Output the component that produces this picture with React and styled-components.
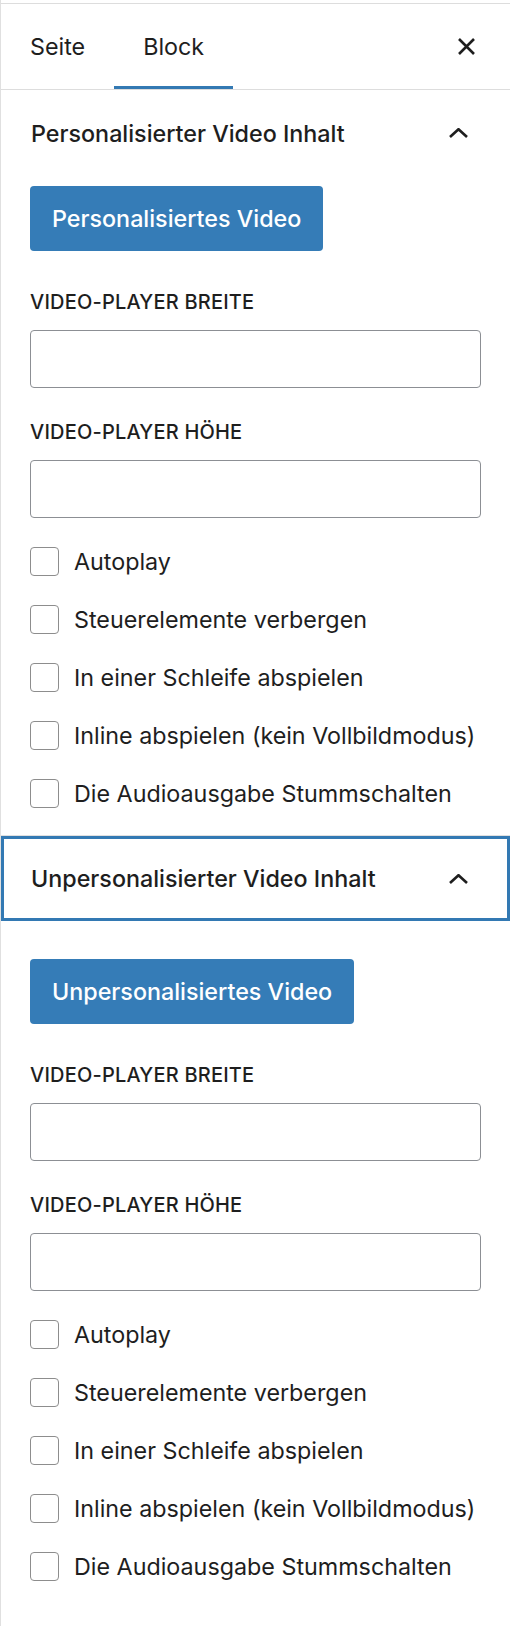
import React from 'react';
import styled, { createGlobalStyle } from 'styled-components';

const GlobalStyle = createGlobalStyle`
    body {
        margin: 0;
        background: #ffffff;
        font-family: Inter, 'Noto Sans', 'Liberation Sans', sans-serif;
        color: #1e1e1e;
    }
`;

const Sidebar = styled.div`
    width: 510px;
    min-height: 1626px;
    box-sizing: border-box;
    padding-top: 3px;
    border-left: 1px solid #e0e0e0;
    background: #ffffff;
`;

const Header = styled.div`
    display: flex;
    align-items: stretch;
    height: 85px;
    padding-right: 22px;
    border-top: 1px solid #dddddd;
    border-bottom: 1px solid #dddddd;
`;

const Tab = styled.div`
    display: flex;
    align-items: center;
    padding: 0 29px;
    font-size: 23.3px;
    color: #1e1e1e;
    box-shadow: ${(p) => (p.$active ? 'inset 0 -3px 0 #3379b3' : 'none')};
`;

const CloseButton = styled.div`
    margin-left: auto;
    width: 43px;
    display: flex;
    align-items: center;
    justify-content: center;
`;

const Panel = styled.section`
    border-top: ${(p) => (p.$divided ? '1px solid #e0e0e0' : 'none')};
`;

const PanelTitle = styled.div`
    display: flex;
    align-items: center;
    justify-content: space-between;
    height: ${(p) => (p.$focused ? '85px' : '86px')};
    padding: 0 42px 0 30px;
    font-size: 23.3px;
    font-weight: 500;
    box-shadow: ${(p) => (p.$focused ? 'inset 0 0 0 3px #3379b3' : 'none')};
`;

const PanelBody = styled.div`
    padding: ${(p) => p.$top}px 29px 27px 29px;
`;

const PrimaryButton = styled.div`
    display: inline-flex;
    align-items: center;
    height: 65px;
    padding: 0 22px;
    box-sizing: border-box;
    border-radius: 4px;
    background: #357cb7;
    color: #ffffff;
    font-size: 23.3px;
    font-weight: 500;
`;

const Field = styled.div`
    margin-top: ${(p) => p.$gap}px;
`;

const Label = styled.div`
    font-size: 20px;
    font-weight: 500;
    line-height: 28px;
    letter-spacing: 0.2px;
    text-transform: uppercase;
    margin-bottom: 14px;
`;

const TextInput = styled.div`
    height: 58px;
    box-sizing: border-box;
    border: 1px solid #8c8f94;
    border-radius: 4px;
    background: #ffffff;
`;

const CheckList = styled.div`
    display: flex;
    flex-direction: column;
    gap: 29px;
    margin-top: 29px;
`;

const CheckRow = styled.div`
    display: flex;
    align-items: center;
    gap: 15px;
    font-size: 23.3px;
    line-height: 29px;
`;

const Box = styled.span`
    width: 29px;
    height: 29px;
    box-sizing: border-box;
    border: 1px solid #8d8d8d;
    border-radius: 4px;
    flex-shrink: 0;
`;

const options = [
    'Autoplay',
    'Steuerelemente verbergen',
    'In einer Schleife abspielen',
    'Inline abspielen (kein Vollbildmodus)',
    'Die Audioausgabe Stummschalten',
];

const panels = [
    { title: 'Personalisierter Video Inhalt', button: 'Personalisiertes Video', top: 10 },
    { title: 'Unpersonalisierter Video Inhalt', button: 'Unpersonalisiertes Video', top: 38, focused: true },
];

const Chevron = () => (
    <svg width="19" height="10" viewBox="0 0 19 10">
        <path d="M1 9 L9.5 1.2 L18 9" fill="none" stroke="#1e1e1e" strokeWidth="2.6" />
    </svg>
);

const CloseIcon = () => (
    <svg width="17" height="17" viewBox="0 0 17 17">
        <path d="M1 1 L16 16 M16 1 L1 16" fill="none" stroke="#1e1e1e" strokeWidth="2.6" />
    </svg>
);

const App = () => (
    <>
        <GlobalStyle />
        <Sidebar>
            <Header>
                <Tab>Seite</Tab>
                <Tab $active>Block</Tab>
                <CloseButton>
                    <CloseIcon />
                </CloseButton>
            </Header>
            {panels.map((panel, i) => (
                <Panel key={panel.title} $divided={i > 0}>
                    <PanelTitle $focused={panel.focused}>
                        {panel.title}
                        <Chevron />
                    </PanelTitle>
                    <PanelBody $top={panel.top}>
                        <PrimaryButton>{panel.button}</PrimaryButton>
                        <Field $gap={37}>
                            <Label>Video-Player Breite</Label>
                            <TextInput />
                        </Field>
                        <Field $gap={30}>
                            <Label>Video-Player Höhe</Label>
                            <TextInput />
                        </Field>
                        <CheckList>
                            {options.map((text) => (
                                <CheckRow key={text}>
                                    <Box />
                                    {text}
                                </CheckRow>
                            ))}
                        </CheckList>
                    </PanelBody>
                </Panel>
            ))}
        </Sidebar>
    </>
);

export default App;
